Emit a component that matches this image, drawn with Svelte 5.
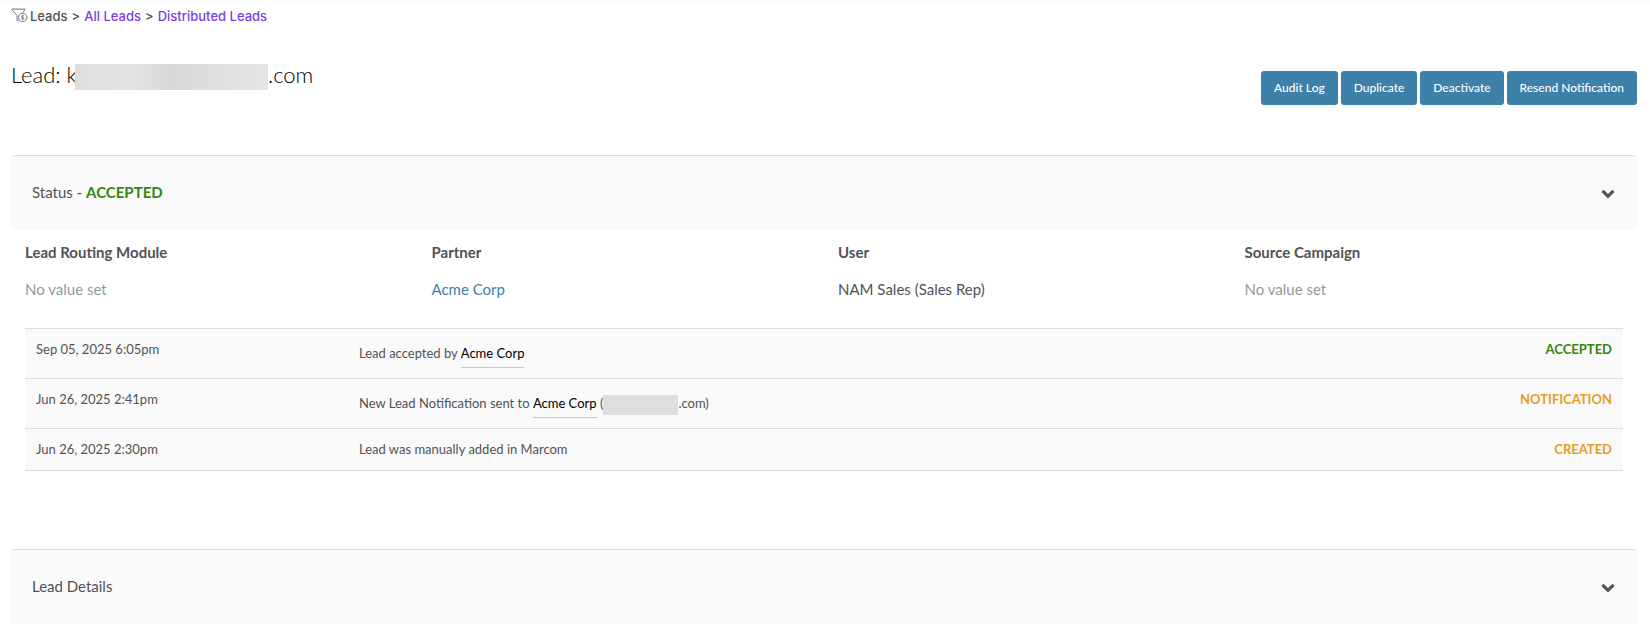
<script>
  let open = $state({ status: true, details: false });

  const actions = ['Audit Log', 'Duplicate', 'Deactivate', 'Resend Notification'];

  const fields = [
    { label: 'Lead Routing Module', value: 'No value set', kind: 'empty' },
    { label: 'Partner', value: 'Acme Corp', kind: 'link' },
    { label: 'User', value: 'NAM Sales (Sales Rep)', kind: 'text' },
    { label: 'Source Campaign', value: 'No value set', kind: 'empty' }
  ];

  const events = [
    { date: 'Sep 05, 2025 6:05pm', text: 'Lead accepted by', partner: 'Acme Corp', status: 'ACCEPTED', tone: 'green' },
    { date: 'Jun 26, 2025 2:41pm', text: 'New Lead Notification sent to', partner: 'Acme Corp', masked: true, status: 'NOTIFICATION', tone: 'amber' },
    { date: 'Jun 26, 2025 2:30pm', text: 'Lead was manually added in Marcom', status: 'CREATED', tone: 'amber' }
  ];
</script>

{#snippet chevron()}
  <svg class="chevron" width="14" height="10" viewBox="0 0 14 10" aria-hidden="true">
    <path d="M0.4 2.9 2.6 0.7 7 5 11.4 0.7 13.6 2.9 7 9.4Z" fill="currentColor" />
  </svg>
{/snippet}

<div class="page">
  <nav class="crumbs" aria-label="Breadcrumb">
    <svg width="17" height="15" viewBox="0 0 17 15" fill="none" stroke="#77787b" aria-hidden="true">
      <path d="M0.5 1.2H14.5" stroke="#a5a5a8" stroke-width="1.6" />
      <path d="M1 1.8 6 7.6V12.4L8 13.4M14 1.8 11.8 4.6" stroke-width="1" />
      <circle cx="11.7" cy="9.4" r="4.2" stroke-width="1" />
      <path d="M13 8.1C12.5 7.4 10.5 7.4 10.5 8.5S13 9.3 13 10.4 10.8 11.4 10.3 10.6M11.7 6.7V12.1" stroke-width="0.9" />
    </svg>
    <span>Leads</span>
    <span>&gt;</span>
    <a href="#all">All Leads</a>
    <span>&gt;</span>
    <a href="#distributed">Distributed Leads</a>
  </nav>

  <header class="top">
    <h1>Lead: k<span class="mask wide"></span>.com</h1>
    <div class="actions">
      {#each actions as action}
        <button type="button">{action}</button>
      {/each}
    </div>
  </header>

  <section class="panel">
    <button class="bar" type="button" aria-expanded={open.status} onclick={() => (open.status = !open.status)}>
      <span>Status - <b class="green">ACCEPTED</b></span>
      {@render chevron()}
    </button>
    {#if open.status}
      <dl class="fields">
        {#each fields as field}
          <div>
            <dt>{field.label}</dt>
            <dd class={field.kind}>
              {#if field.kind === 'link'}<a href="#partner">{field.value}</a>{:else}{field.value}{/if}
            </dd>
          </div>
        {/each}
      </dl>
      <div class="history">
        <table>
          <tbody>
            {#each events as event}
              <tr>
                <td class="date">{event.date}</td>
                <td>
                  {event.text}
                  {#if event.partner}<a class="partner" href="#partner">{event.partner}</a>{/if}
                  {#if event.masked}(<span class="mask small"></span>.com){/if}
                </td>
                <td class="state {event.tone}">{event.status}</td>
              </tr>
            {/each}
          </tbody>
        </table>
      </div>
    {/if}
  </section>

  <section class="panel">
    <button class="bar" type="button" aria-expanded={open.details} onclick={() => (open.details = !open.details)}>
      <span>Lead Details</span>
      {@render chevron()}
    </button>
  </section>
</div>

<style>
  :global(body) {
    margin: 0;
    background: #fff;
  }
  .page {
    padding: 7px 13px 4px 11px;
    background: linear-gradient(#fafafa, #fff 6px);
    color: #515356;
    font-family: Lato, sans-serif;
    font-size: 15px;
    line-height: 20px;
  }
  a {
    color: #3d80aa;
    text-decoration: none;
  }
  .crumbs {
    display: flex;
    align-items: center;
    gap: 4px;
    height: 17px;
    font-family: Inter, sans-serif;
    font-size: 13px;
    font-weight: 500;
  }
  .crumbs svg {
    margin-right: -2px;
  }
  .crumbs a {
    color: #7a3ee8;
  }
  .top {
    display: flex;
    justify-content: space-between;
    align-items: flex-start;
    margin-top: 36px;
  }
  h1 {
    display: flex;
    align-items: center;
    margin: 0;
    color: #000;
    font-size: 22px;
    font-weight: 300;
    line-height: 30px;
  }
  .mask {
    display: inline-block;
    background: #dedede;
  }
  .wide {
    width: 193px;
    height: 26px;
    margin: 4px 0 0 -2px;
    background: linear-gradient(90deg, #dedede, #e3e3e3 30%, #d8d8d8 50%, #dedede 70%, #e5e5e5);
  }
  .small {
    width: 75px;
    height: 20px;
    vertical-align: middle;
  }
  .actions {
    display: flex;
    gap: 3px;
    padding-top: 11px;
  }
  .actions button {
    height: 34px;
    padding: 0 13px;
    border: 0;
    border-radius: 3px;
    background: #3d80aa;
    color: #fff;
    font: 500 12px/20px Lato, sans-serif;
  }
  .panel {
    margin-top: 50px;
  }
  .panel + .panel {
    margin-top: 78px;
  }
  .bar {
    display: flex;
    justify-content: space-between;
    align-items: center;
    width: 100%;
    height: 75px;
    padding: 1px 22px 0 21px;
    border: 0;
    border-top: 1px solid #dcdcdc;
    border-radius: 4px 4px 0 0;
    background: #fafafa;
    color: inherit;
    font: inherit;
    text-align: left;
  }
  .bar span {
    padding-bottom: 4px;
  }
  .green {
    color: #36860f;
  }
  .amber {
    color: #e99c1f;
  }
  .fields {
    display: grid;
    grid-template-columns: repeat(4, 1fr);
    margin: 0;
    padding: 12px 0 29px;
  }
  .fields div {
    padding: 0 14px;
  }
  dt {
    font-weight: 700;
  }
  dd {
    margin: 17px 0 0;
  }
  .empty {
    color: #929a9f;
  }
  .history {
    padding: 0 14px;
  }
  table {
    width: 100%;
    border-spacing: 0;
    border-bottom: 1px solid #dcdcdc;
    background: #fafafa;
    font-size: 13px;
    line-height: 21px;
  }
  td {
    padding: 10px 11px;
    border-top: 1px solid #dcdcdc;
    vertical-align: top;
  }
  .date {
    width: 301px;
  }
  .state {
    font-weight: 700;
    text-align: right;
  }
  .partner {
    display: inline-block;
    padding: 4px 0 3px;
    border-bottom: 1px solid #c8c8c8;
    color: #000;
  }
</style>
